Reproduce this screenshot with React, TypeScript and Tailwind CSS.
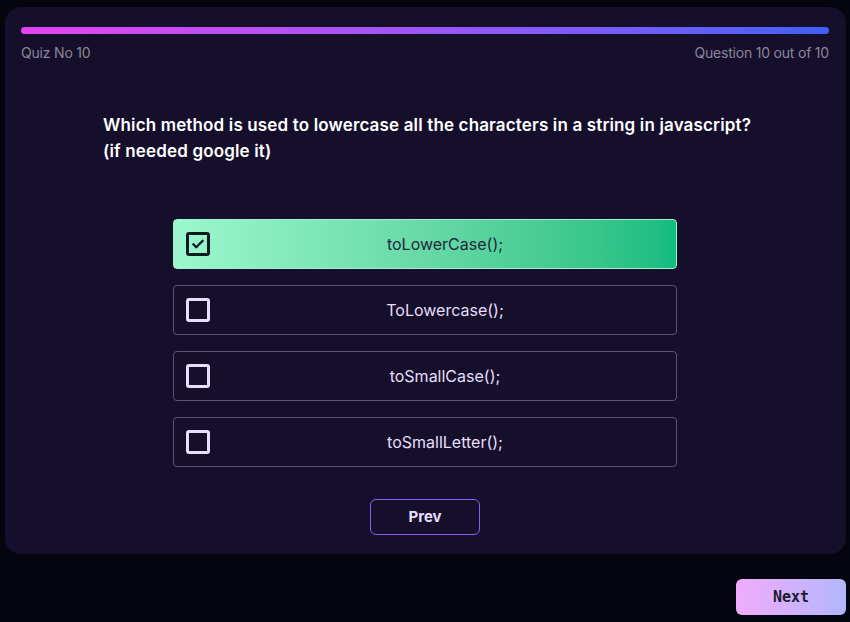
import React from 'react';

const options = ['toLowerCase();', 'ToLowercase();', 'toSmallCase();', 'toSmallLetter();'];

const Check = () => (
    <svg width="14" height="14" viewBox="0 0 24 24" fill="none" stroke="#0f172a" strokeWidth="4" strokeLinecap="round" strokeLinejoin="round">
        <path d="M4 12.5l5 5L20 6.5" />
    </svg>
);

export default function App() {
    const selected = 0;
    return (
        <div className="w-[850px] h-[622px] bg-[#05050f] pt-[7px] pl-[5px] pr-[4px] flex flex-col" style={{ fontFamily: 'Inter, "Noto Sans", sans-serif' }}>
            <div className="bg-[#150f2c] rounded-2xl h-[547px] pl-4 pr-[17px] pt-5 flex flex-col">
                <div className="h-[7px] rounded-full bg-gradient-to-r from-[#e342f2] via-[#9d55f8] to-[#3f5ffc]" />
                <div className="flex justify-between mt-[9px] text-[14px] leading-5 text-[#8b8797] tracking-[-0.2px]">
                    <span>Quiz No 10</span>
                    <span>Question 10 out of 10</span>
                </div>

                <div className="pl-[82px] mt-[49px] text-[17px] leading-[26px] font-semibold text-white tracking-[0.15px]">
                    <p>Which method is used to lowercase all the characters in a string in javascript?</p>
                    <p>(if needed google it)</p>
                </div>

                <div className="flex flex-col items-center gap-4 mt-[55px]">
                    {options.map((opt, i) => (
                        <div
                            key={opt}
                            className={
                                i === selected
                                    ? 'w-[504px] h-[50px] rounded flex items-center px-3 bg-gradient-to-r from-[#9cf7cf] to-[#10bc7f] border border-[#a7f3d0] text-[#1e293b]'
                                    : 'w-[504px] h-[50px] rounded flex items-center px-3 border border-[#5b5570] text-[#e7defa]'
                            }
                        >
                            <div
                                className={
                                    i === selected
                                        ? 'w-6 h-6 rounded-[3px] border-[3px] border-[#0f1a1f] flex items-center justify-center'
                                        : 'w-6 h-6 rounded-[3px] border-[3px] border-[#e7defa]'
                                }
                            >
                                {i === selected && <Check />}
                            </div>
                            <span className="flex-1 text-center text-[16px] ml-4">{opt}</span>
                        </div>
                    ))}
                </div>

                <div className="flex justify-center mt-8">
                    <button className="w-[110px] h-9 rounded-md border border-[#8b5cf6] text-[#e7defa] font-bold text-[15px]">Prev</button>
                </div>
            </div>

            <div className="flex justify-end mt-[25px]">
                <button
                    className="w-[110px] h-9 rounded-md bg-gradient-to-r from-[#f0abfc] to-[#b2b6fd] text-[#1e1b2e] font-bold text-[15px]"
                    style={{ fontFamily: '"DejaVu Sans Mono", monospace' }}
                >
                    Next
                </button>
            </div>
        </div>
    );
}
